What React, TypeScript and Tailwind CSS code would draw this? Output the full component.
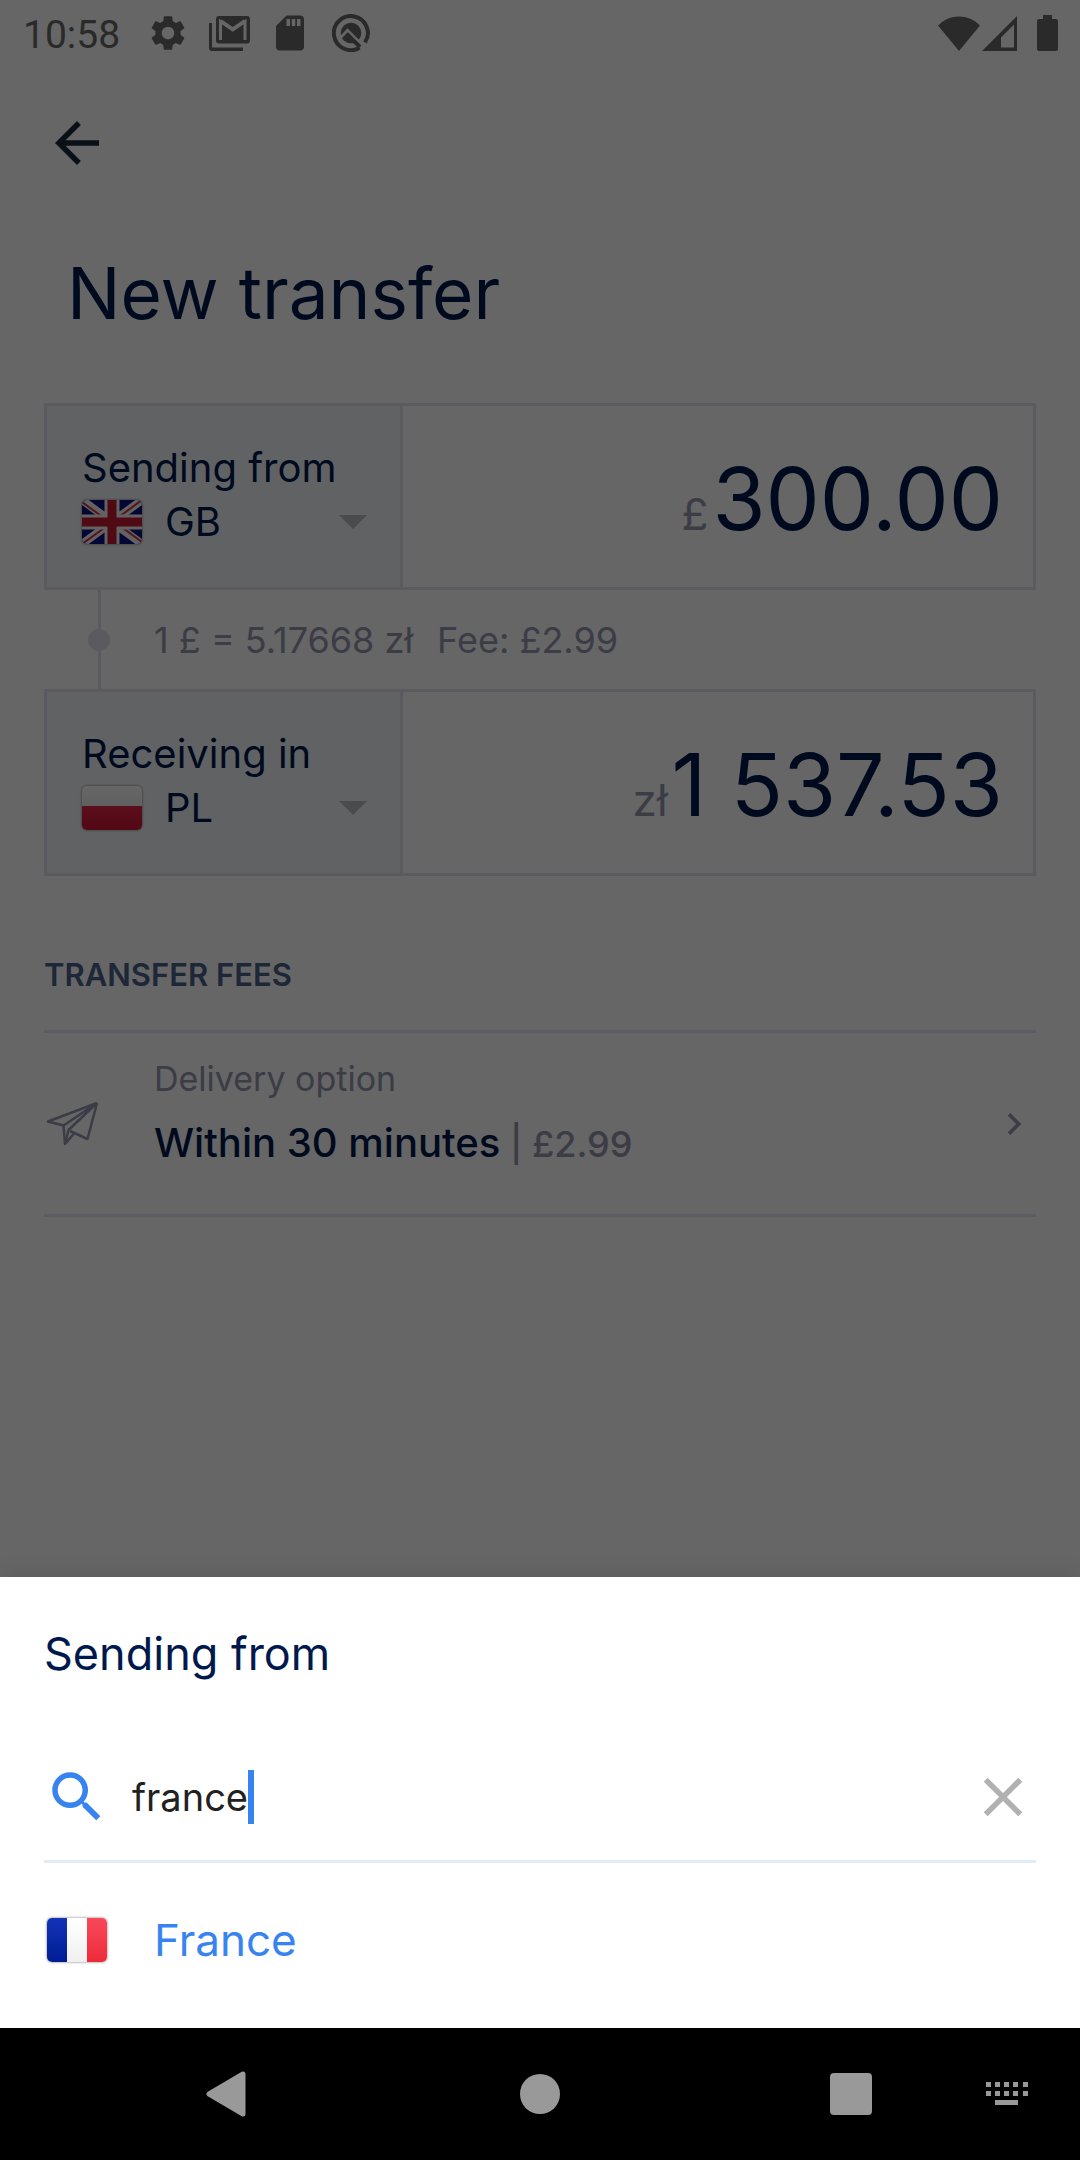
import { useState, type ReactNode } from "react";
import { MdSettings, MdSdCard, MdArrowBack, MdSearch, MdClose, MdChevronRight } from "react-icons/md";

function GmailIcon() {
  return (
    <svg className="h-[35px] w-[41px]" viewBox="0 0 41 35" aria-hidden="true">
      <path d="M0 7h3v24.500h31V35H3a3 3 0 0 1-3-3z" fill="currentColor" />
      <rect x="7" y="0" width="34" height="27.500" rx="3" fill="currentColor" />
      <path d="M11.500 24V5.500L23.700 14 36 5.500V24" fill="none" stroke="#fff" strokeWidth="3" />
      <path d="M12 4.500 23.700 12.500 35.500 4.500" fill="none" stroke="#fff" strokeWidth="2.500" />
    </svg>
  );
}

function SystemBadgeIcon() {
  return (
    <svg className="size-[38px]" viewBox="0 0 38 38" fill="none" aria-hidden="true">
      <path d="M33 28.500A17 17 0 1 0 27.500 33.700" stroke="currentColor" strokeWidth="4" />
      <circle cx="19" cy="19" r="10.300" fill="currentColor" />
      <path d="M8 24.500 15.500 16.500 34 35" stroke="#fff" strokeWidth="3" />
      <path d="M11.500 25.500 16 21 28 33" stroke="currentColor" strokeWidth="4" />
    </svg>
  );
}

function WifiIcon() {
  return (
    <svg className="h-[35px] w-[42px]" viewBox="0 0 42 35" aria-hidden="true">
      <path d="M0 9.500C6 3.500 13 .5 21 .5s15 3 21 9L21 35z" fill="currentColor" />
    </svg>
  );
}

function SignalIcon() {
  return (
    <svg className="size-[35px]" viewBox="0 0 35 35" aria-hidden="true">
      <path fillRule="evenodd" d="M35 0v35H0zM32 8.500 19 21.500V31.500h13z" fill="currentColor" />
    </svg>
  );
}

function BatteryIcon() {
  return (
    <svg className="h-[36px] w-[21px]" viewBox="0 0 21 36" aria-hidden="true">
      <path d="M6 0h9v4h4a2 2 0 0 1 2 2v28a2 2 0 0 1-2 2H2a2 2 0 0 1-2-2V6a2 2 0 0 1 2-2h4z" fill="currentColor" />
    </svg>
  );
}

function PaperPlaneIcon() {
  return (
    <svg className="size-[56px]" viewBox="4 6 56 56" fill="none" stroke="currentColor" strokeWidth="2.500" strokeLinejoin="round" aria-hidden="true">
      <path d="M57 13 8 31.500 23.500 35.500 25 54 34 43.500" />
      <path d="M57 13 47.500 49 30 41" />
      <path d="M57 13 23.500 35.500" />
      <path d="M57 13 28.500 40 25 54" />
    </svg>
  );
}

function UkFlag() {
  return (
    <svg className="block h-full w-full" viewBox="0 0 60 44" preserveAspectRatio="none" aria-hidden="true">
      <rect width="60" height="44" fill="#0c1382" />
      <path d="M0 0 60 44M60 0 0 44" stroke="#f4f4f4" strokeWidth="8" />
      <path d="M0 2 24 19.500M60 0 34 19M0 44 25 26M60 42 36 24.500" stroke="#d8304a" strokeWidth="2" />
      <path d="M30 0v44M0 22h60" stroke="#f4f4f4" strokeWidth="15" />
      <path d="M30 0v44M0 22h60" stroke="#c81a34" strokeWidth="9" />
    </svg>
  );
}

function PolandFlag() {
  return (
    <span className="flex h-full w-full flex-col">
      <span className="h-[20px] bg-gradient-to-b from-white to-[#f0f0f0]" />
      <span className="flex-1 bg-gradient-to-b from-[#e02444] to-[#cf1434]" />
    </span>
  );
}

function FranceFlag() {
  return (
    <span className="flex h-full w-full">
      <span className="flex-1 bg-gradient-to-b from-[#1434b8] to-[#001c94]" />
      <span className="flex-1 bg-gradient-to-b from-white to-[#f0f0f0]" />
      <span className="flex-1 bg-gradient-to-b from-[#f8485a] to-[#ee2a3a]" />
    </span>
  );
}

function Flag({ children }: { children: ReactNode }) {
  return (
    <span className="block h-[44px] w-[60px] shrink-0 overflow-hidden rounded-[5px] shadow-[0_0_2px_1px_rgba(0,0,0,0.25)]">
      {children}
    </span>
  );
}

type AmountCardProps = {
  id: string;
  label: string;
  code: string;
  flag: ReactNode;
  currency: string;
  amount: string;
};

function AmountCard({ id, label, code, flag, currency, amount }: AmountCardProps) {
  const [value, setValue] = useState(amount);
  return (
    <section className="grid grid-cols-[356px_1fr] border-[3px] border-[#e1e1ed]">
      <button
        type="button"
        aria-haspopup="dialog"
        className="border-r-[3px] border-[#e1e1ed] bg-[#f0f5fa] pt-[36px] pr-[33px] pb-[37px] pl-[35px] text-left text-[40px] text-[#00194d]"
      >
        <span className="block leading-[52px]">{label}</span>
        <span className="flex items-center leading-[56px]">
          <Flag>{flag}</Flag>
          <span className="ml-[23px] flex-1">{code}</span>
          <svg className="h-[14px] w-[28px] text-[#bcbcc6]" viewBox="0 0 28 14" aria-hidden="true">
            <path d="M0 0h28L14 14z" fill="currentColor" />
          </svg>
        </span>
      </button>
      <label htmlFor={id} className="flex items-center justify-end pt-1 pr-[30px]">
        <span className="flex items-baseline gap-1">
          <span className="text-[44px] text-[#9396af]">{currency}</span>
          <input
            id={id}
            inputMode="decimal"
            aria-label={`${label} amount`}
            value={value}
            onChange={(e) => setValue(e.target.value)}
            className="bg-transparent text-right text-[86px] leading-[104px] text-[#00194d] outline-none [field-sizing:content]"
          />
        </span>
      </label>
    </section>
  );
}

function KeyboardIcon() {
  return (
    <svg className="h-[24px] w-[42px]" viewBox="0 0 42 24" fill="currentColor" aria-hidden="true">
      {[0, 9, 18, 27, 37].map((x) => (
        <g key={x}>
          <rect x={x} y="0" width="5" height="5" />
          <rect x={x} y="9" width="5" height="5" />
        </g>
      ))}
      <rect x="9" y="18" width="23" height="5" />
    </svg>
  );
}

export default function App() {
  const [query, setQuery] = useState("france");
  return (
    <div className="flex min-h-screen flex-col bg-white font-['Inter',sans-serif]">
      <div className="relative flex flex-1 flex-col">
        <header className="flex h-[66px] items-center justify-between pr-[22px] pl-[23px] text-[#696969]">
          <div className="flex items-center">
            <time className="w-[124px] pt-[3px] font-['Roboto',sans-serif] text-[39px] leading-[44px]">10:58</time>
            <MdSettings className="size-[42px]" />
            <span className="ml-[20px]"><GmailIcon /></span>
            <MdSdCard className="ml-[19px] size-[42px]" />
            <span className="ml-[21px]"><SystemBadgeIcon /></span>
          </div>
          <div className="flex items-center">
            <WifiIcon />
            <span className="ml-[2px]"><SignalIcon /></span>
            <span className="ml-[20px]"><BatteryIcon /></span>
          </div>
        </header>

        <main className="px-[44px]">
          <div className="pt-[44px]">
            <button type="button" aria-label="Back" className="block text-[#19283c]">
              <MdArrowBack className="size-[66px]" />
            </button>
          </div>
          <h1 className="mt-[77px] pl-[23px] text-[71px] leading-[80px] text-[#00194d]">New transfer</h1>

          <div className="mt-[70px]">
            <AmountCard id="send" label="Sending from" code="GB" flag={<UkFlag />} currency="£" amount="300.00" />
            <div className="flex items-stretch">
              <div className="flex w-[110px] items-center justify-center">
                <span className="flex w-[3px] items-center justify-center self-stretch bg-[#e1e1ed]">
                  <span className="size-[22px] shrink-0 rounded-full bg-[#e1e1ed]" />
                </span>
              </div>
              <p className="flex gap-[24px] pt-[28px] pb-[27px] text-[36px] leading-[44px] text-[#9396af]">
                <span>1 £ = 5.17668 zł</span>
                <span>Fee: £2.99</span>
              </p>
            </div>
            <AmountCard id="receive" label="Receiving in" code="PL" flag={<PolandFlag />} currency="zł" amount="1 537.53" />
          </div>

          <h2 className="mt-[79px] text-[31px] leading-[40px] font-semibold text-[#4d618c]">TRANSFER FEES</h2>
          <button
            type="button"
            className="mt-[35px] flex w-full items-center border-y-[3px] border-[#e6e9f4] text-left text-[#9396af]"
          >
            <span className="w-[110px]"><PaperPlaneIcon /></span>
            <span className="flex-1 pt-[22px] pb-[41px]">
              <span className="block text-[34px] leading-[48px]">Delivery option</span>
              <span className="mt-[10px] block text-[40px] leading-[60px] font-medium">
                <span className="text-[#00194d]">Within 30 minutes</span>
                <span className="text-[36px] leading-none"> | £2.99</span>
              </span>
            </span>
            <MdChevronRight className="size-[44px]" />
          </button>
        </main>

        <div className="absolute inset-0 flex flex-col justify-end bg-black/60">
          <section
            role="dialog"
            aria-labelledby="sheet-title"
            className="bg-white px-[44px] shadow-[0_0_24px_rgba(0,0,0,0.12)]"
          >
            <h2 id="sheet-title" className="pt-[47px] text-[45px] leading-[60px] text-[#00194d]">Sending from</h2>
            <div className="mt-[80px] flex items-center border-b-[3px] border-[#dfecf5] pb-[30px]">
              <MdSearch className="size-[66px] text-[#3784f0]" />
              <input
                type="text"
                aria-label="Search country"
                value={query}
                onChange={(e) => setQuery(e.target.value)}
                className="ml-[22px] bg-transparent text-[38px] leading-[54px] text-[#212121] caret-transparent outline-none [field-sizing:content]"
              />
              <span className="h-[54px] w-[6px] bg-[#3784f0]" />
              <button type="button" aria-label="Clear search" className="ml-auto text-[#b1b1b1]" onClick={() => setQuery("")}>
                <MdClose className="size-[66px]" />
              </button>
            </div>
            <ul>
              <li>
                <button type="button" className="flex w-full items-center pt-[47px] pb-[58px] text-left text-[44px] leading-[60px] text-[#3784f0]">
                  <span className="w-[110px] pl-[3px]"><Flag><FranceFlag /></Flag></span>
                  France
                </button>
              </li>
            </ul>
          </section>
        </div>
      </div>

      <nav className="grid h-[132px] grid-cols-[146px_1fr_146px] items-center bg-black text-[#999]">
        <div className="col-start-2 flex items-center justify-between">
          <button type="button" aria-label="Back" className="flex w-[166px] justify-center pr-[6px]">
            <svg className="h-[46px] w-[40px]" viewBox="0 0 40 46" aria-hidden="true">
              <path d="M37 3v40L3 23z" fill="currentColor" stroke="currentColor" strokeWidth="5" strokeLinejoin="round" />
            </svg>
          </button>
          <button type="button" aria-label="Home" className="flex w-[166px] justify-center">
            <span className="size-[40px] rounded-full bg-[#999]" />
          </button>
          <button type="button" aria-label="Recent apps" className="flex w-[166px] justify-center">
            <span className="size-[42px] rounded-[4px] bg-[#999]" />
          </button>
        </div>
        <button type="button" aria-label="Switch keyboard" className="flex justify-center">
          <KeyboardIcon />
        </button>
      </nav>
    </div>
  );
}
